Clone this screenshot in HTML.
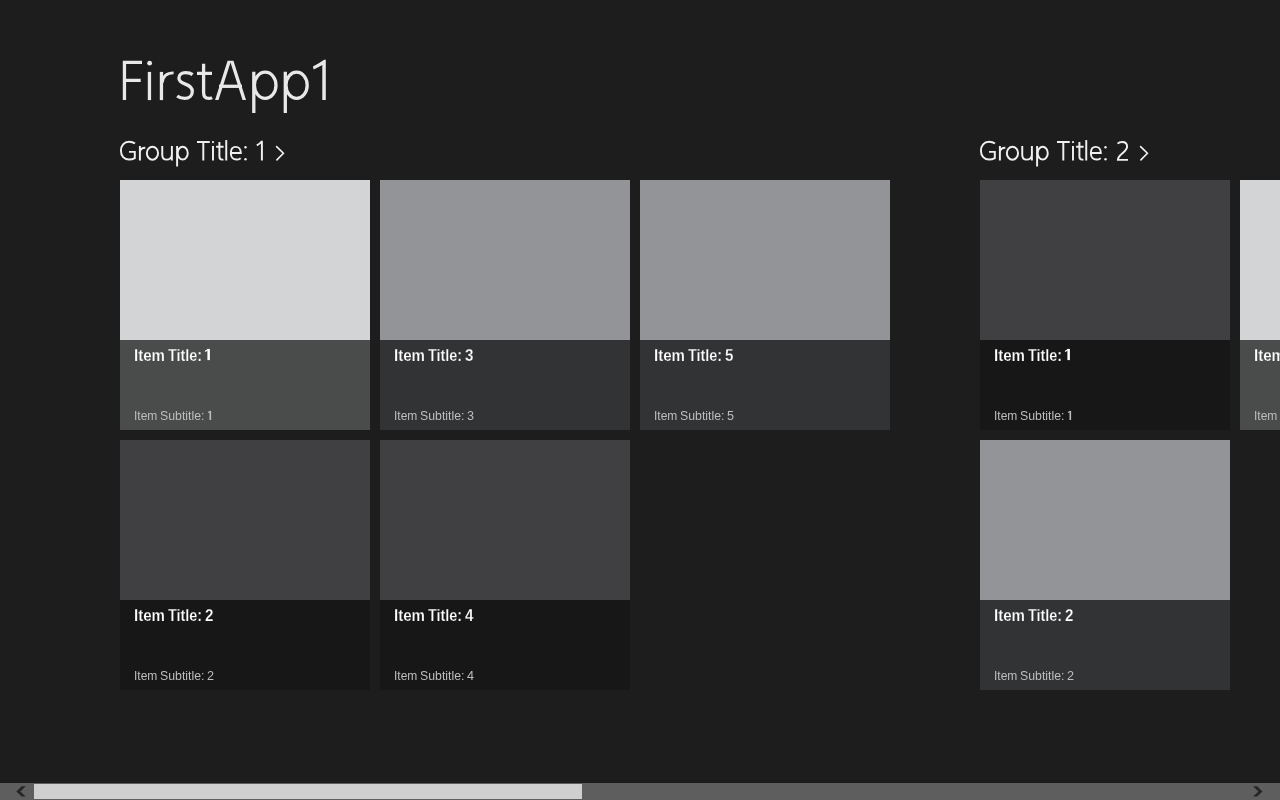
<!DOCTYPE html>
<html>
<head>
<meta charset="utf-8">
<style>
html,body{margin:0;padding:0;}
body{will-change:transform;width:1280px;height:800px;overflow:hidden;background:#1d1d1d;position:relative;font-family:"Liberation Sans",sans-serif;color:#fff;}
.t{position:absolute;white-space:nowrap;line-height:1;}
#title{left:118px;top:52px;margin:0;font-size:52px;font-weight:normal;color:transparent;}
.gt{margin:0;font-size:24px;font-weight:normal;color:transparent;}
.tile{position:absolute;width:250px;height:250px;overflow:hidden;}
.tile .img{position:absolute;left:0;top:0;width:250px;height:160px;}
.tile .ov{position:absolute;left:0;top:160px;width:250px;height:90px;}
.tile .w{position:absolute;white-space:nowrap;line-height:1;transform-origin:0 0;}
.tile .b{font-size:16px;font-weight:bold;color:#fff;top:8px;}
.tile .s{font-size:13px;color:#bebebe;top:69px;}
.light .img{background:#d3d4d6}.light .ov{background:#4a4b4b}.light .b{-webkit-text-stroke:0.25px #4a4b4b}
.mid .img{background:#939498}.mid .ov{background:#323335}.mid .b{-webkit-text-stroke:0.25px #323335}
.dark .img{background:#404042}.dark .ov{background:#171717}.dark .b{-webkit-text-stroke:0.25px #171717}
#sb{position:absolute;left:0;top:783px;width:1280px;height:17px;background:#5e5e5e;}
#thumb{position:absolute;left:34px;top:784px;width:548px;height:15px;background:#cfcfcf;}
</style>
</head>
<body>
<h1 class="t" id="title">FirstApp1</h1>
<h2 class="t gt" style="left:119px;top:139px;">Group Title: 1 ›</h2>
<h2 class="t gt" style="left:979px;top:139px;">Group Title: 2 ›</h2>
<svg style="position:absolute;left:0;top:0" width="400" height="130" viewBox="0 0 400 130">
<g fill="none" stroke="#e8e8e8" stroke-width="3.3" stroke-miterlimit="20">
<path d="M124.45,100.1 V62.45 H142 M124.45,80.45 H140.7"/>
<path d="M149.45,71.9 V100.1"/>
<path d="M161.45,71.9 V100.1"/><path stroke-width="2.9" d="M162.2,82.5 C163,76.2 166.8,72.9 173.6,72.9"/>
<path d="M192.6,74.6 C190.8,73.2 188.3,72.6 185.6,72.6 C181.2,72.6 178.9,75 178.9,78.2 C178.9,81.6 181.8,82.8 185.4,84.1 C189.6,85.6 192.3,87.4 192.3,91.4 C192.3,95.6 189.1,98.4 184.6,98.4 C181.6,98.4 179,97.5 177.2,96"/>
<path d="M203.6,63.8 V92.5 C203.6,96.6 205.4,98.4 208.6,98.4 C210,98.4 211.2,98.1 212.1,97.6 M197,73.3 H212"/>
<path d="M219,86.3 H242"/>
<ellipse cx="265.2" cy="85.3" rx="10.8" ry="13.1"/>
<ellipse cx="296.6" cy="85.3" rx="10.6" ry="13.1"/>

</g>
<g fill="none" stroke="#e8e8e8" stroke-width="3.3">
<path d="M253.8,71.75 V113 M285.3,71.75 V113"/>
</g>
<circle cx="149.6" cy="63.2" r="2.4" fill="#e8e8e8"/>
<polygon points="215.07,100.1 227.56,60.8 233.45,60.8 246.02,100.1 242.56,100.1 230.5,62.42 218.53,100.1" fill="#e8e8e8"/>
<path d="M322.3,100.1 H325.8 V59.7 H324.2 Q318.6,63.6 312.9,66.5 L313.7,69.4 Q318.2,67.3 322.3,64.9 Z" fill="#e8e8e8"/>
</svg>
<svg style="position:absolute;left:0;top:0" width="1280" height="180" viewBox="0 0 1280 180">
<g>
<g fill="none" stroke="#f0f0f0" stroke-width="1.95">
<path d="M135,143.6 C133.4,142.3 131.4,141.75 129,141.75 C124,141.75 120.95,145.6 120.95,150.7 C120.95,156 124.2,159.55 129,159.55 C131.3,159.55 133.3,159 134.8,158.1 V151.85 H129"/>
<path d="M139.9,145.9 V160.5 M139.9,151.5 C140.4,149 142.2,147.75 145.3,147.75"/>
<ellipse cx="152.45" cy="153.2" rx="5.6" ry="6.45"/>
<path d="M162.25,146 V155 C162.25,158 163.9,159.6 166.6,159.6 C169.4,159.6 171.9,157.6 171.9,154.2 M171.9,146 V160.5"/>
<path d="M177.1,146 V166.5"/>
<ellipse cx="182.7" cy="153.15" rx="5.05" ry="6.45"/>
<path d="M197,142.05 H209.75 M203.3,142.05 V160.5"/>
<path d="M213,146.06 V160.5"/>
<path d="M219.4,141.9 V156.5 C219.4,158.8 220.5,159.6 222,159.6 C222.6,159.6 223,159.5 223.4,159.3 M216.1,146.8 H223.6"/>
<path d="M226.25,140.06 V160.5"/>
<path d="M230.85,153 H240.8 C240.8,149 238.5,146.85 235.7,146.85 C232.7,146.85 230.85,149.4 230.85,153.2 C230.85,157.1 233.2,159.55 236.4,159.55 C238,159.55 239.4,159.1 240.7,158.2"/>
<path d="M261.9,140.8 V160.5 M256.8,145.3 C258.8,144.3 260.5,143 261.6,141.5"/>
</g>
<g fill="none" stroke="#f0f0f0" stroke-width="1.95" transform="translate(860,0)">
<path d="M135,143.6 C133.4,142.3 131.4,141.75 129,141.75 C124,141.75 120.95,145.6 120.95,150.7 C120.95,156 124.2,159.55 129,159.55 C131.3,159.55 133.3,159 134.8,158.1 V151.85 H129"/>
<path d="M139.9,145.9 V160.5 M139.9,151.5 C140.4,149 142.2,147.75 145.3,147.75"/>
<ellipse cx="152.45" cy="153.2" rx="5.6" ry="6.45"/>
<path d="M162.25,146 V155 C162.25,158 163.9,159.6 166.6,159.6 C169.4,159.6 171.9,157.6 171.9,154.2 M171.9,146 V160.5"/>
<path d="M177.1,146 V166.5"/>
<ellipse cx="182.7" cy="153.15" rx="5.05" ry="6.45"/>
<path d="M197,142.05 H209.75 M203.3,142.05 V160.5"/>
<path d="M213,146.06 V160.5"/>
<path d="M219.4,141.9 V156.5 C219.4,158.8 220.5,159.6 222,159.6 C222.6,159.6 223,159.5 223.4,159.3 M216.1,146.8 H223.6"/>
<path d="M226.25,140.06 V160.5"/>
<path d="M230.85,153 H240.8 C240.8,149 238.5,146.85 235.7,146.85 C232.7,146.85 230.85,149.4 230.85,153.2 C230.85,157.1 233.2,159.55 236.4,159.55 C238,159.55 239.4,159.1 240.7,158.2"/>
</g>
<g fill="none" stroke="#f0f0f0" stroke-width="1.95">
<path d="M1117.6,143.6 C1118.8,142.4 1120.5,141.9 1122.3,141.9 C1125.2,141.9 1127.1,143.8 1127.1,146.6 C1127.1,149.2 1125.5,150.8 1122.5,153.2 C1119.2,155.8 1117.9,157.2 1117.9,159.85 H1128"/>
</g>
</g>
<g fill="#f0f0f0"><circle cx="213" cy="142.05" r="1.1"/><circle cx="245.5" cy="147.3" r="1.2"/><circle cx="245.5" cy="159.3" r="1.2"/><g transform="translate(860,0)"><circle cx="213" cy="142.05" r="1.1"/><circle cx="245.5" cy="147.3" r="1.2"/><circle cx="245.5" cy="159.3" r="1.2"/></g></g>
</svg>
<svg style="position:absolute;left:270px;top:140px" width="20" height="25" viewBox="0 0 20 25"><path d="M6.6 6.6 L13.4 13.3 L6.9 19.9" fill="none" stroke="#f2f2f2" stroke-width="1.6" stroke-linecap="round" stroke-linejoin="miter"/></svg>
<svg style="position:absolute;left:1134px;top:140px" width="20" height="25" viewBox="0 0 20 25"><path d="M6.6 6.6 L13.4 13.3 L6.9 19.9" fill="none" stroke="#f2f2f2" stroke-width="1.6" stroke-linecap="round" stroke-linejoin="miter"/></svg>

<div class="tile light" style="left:120px;top:180px;"><div class="img"></div><div class="ov"><span class="w b" style="left:13.86px;transform:scaleX(0.942)">Item</span><span class="w b" style="left:48px;transform:scaleX(0.9)">Title:</span><svg style="position:absolute;left:80px;top:5px" width="14" height="80" viewBox="80 5 14 80"><rect x="87.4" y="8.9" width="2.5" height="11.2" fill="#fff"/><path d="M85.1,11.5 L88.2,9.5" stroke="#fff" stroke-width="1.4"/><rect x="89.5" y="70.9" width="1.6" height="9.1" fill="#bebebe"/><path d="M88.1,72.6 L90,71.5" stroke="#bebebe" stroke-width="1.2"/></svg><span class="w s" style="left:13.9px;transform:scaleX(0.925)">Item</span><span class="w s" style="left:40.35px;transform:scaleX(0.947)">Subtitle:</span></div></div>
<div class="tile dark" style="left:120px;top:440px;"><div class="img"></div><div class="ov"><span class="w b" style="left:13.86px;transform:scaleX(0.942)">Item</span><span class="w b" style="left:48px;transform:scaleX(0.9)">Title:</span><span class="w b" style="left:84.8px;transform:scaleX(0.95)">2</span><span class="w s" style="left:13.9px;transform:scaleX(0.925)">Item</span><span class="w s" style="left:40.35px;transform:scaleX(0.947)">Subtitle:</span><span class="w s" style="left:87.1px;transform:scaleX(0.97)">2</span></div></div>
<div class="tile mid" style="left:380px;top:180px;"><div class="img"></div><div class="ov"><span class="w b" style="left:13.86px;transform:scaleX(0.942)">Item</span><span class="w b" style="left:48px;transform:scaleX(0.9)">Title:</span><span class="w b" style="left:84.8px;transform:scaleX(0.95)">3</span><span class="w s" style="left:13.9px;transform:scaleX(0.925)">Item</span><span class="w s" style="left:40.35px;transform:scaleX(0.947)">Subtitle:</span><span class="w s" style="left:87.1px;transform:scaleX(0.97)">3</span></div></div>
<div class="tile dark" style="left:380px;top:440px;"><div class="img"></div><div class="ov"><span class="w b" style="left:13.86px;transform:scaleX(0.942)">Item</span><span class="w b" style="left:48px;transform:scaleX(0.9)">Title:</span><span class="w b" style="left:84.8px;transform:scaleX(0.95)">4</span><span class="w s" style="left:13.9px;transform:scaleX(0.925)">Item</span><span class="w s" style="left:40.35px;transform:scaleX(0.947)">Subtitle:</span><span class="w s" style="left:87.1px;transform:scaleX(0.97)">4</span></div></div>
<div class="tile mid" style="left:640px;top:180px;"><div class="img"></div><div class="ov"><span class="w b" style="left:13.86px;transform:scaleX(0.942)">Item</span><span class="w b" style="left:48px;transform:scaleX(0.9)">Title:</span><span class="w b" style="left:84.8px;transform:scaleX(0.95)">5</span><span class="w s" style="left:13.9px;transform:scaleX(0.925)">Item</span><span class="w s" style="left:40.35px;transform:scaleX(0.947)">Subtitle:</span><span class="w s" style="left:87.1px;transform:scaleX(0.97)">5</span></div></div>

<div class="tile dark" style="left:980px;top:180px;"><div class="img"></div><div class="ov"><span class="w b" style="left:13.86px;transform:scaleX(0.942)">Item</span><span class="w b" style="left:48px;transform:scaleX(0.9)">Title:</span><svg style="position:absolute;left:80px;top:5px" width="14" height="80" viewBox="80 5 14 80"><rect x="87.4" y="8.9" width="2.5" height="11.2" fill="#fff"/><path d="M85.1,11.5 L88.2,9.5" stroke="#fff" stroke-width="1.4"/><rect x="89.5" y="70.9" width="1.6" height="9.1" fill="#bebebe"/><path d="M88.1,72.6 L90,71.5" stroke="#bebebe" stroke-width="1.2"/></svg><span class="w s" style="left:13.9px;transform:scaleX(0.925)">Item</span><span class="w s" style="left:40.35px;transform:scaleX(0.947)">Subtitle:</span></div></div>
<div class="tile mid" style="left:980px;top:440px;"><div class="img"></div><div class="ov"><span class="w b" style="left:13.86px;transform:scaleX(0.942)">Item</span><span class="w b" style="left:48px;transform:scaleX(0.9)">Title:</span><span class="w b" style="left:84.8px;transform:scaleX(0.95)">2</span><span class="w s" style="left:13.9px;transform:scaleX(0.925)">Item</span><span class="w s" style="left:40.35px;transform:scaleX(0.947)">Subtitle:</span><span class="w s" style="left:87.1px;transform:scaleX(0.97)">2</span></div></div>
<div class="tile light" style="left:1240px;top:180px;"><div class="img"></div><div class="ov"><span class="w b" style="left:13.86px;transform:scaleX(0.942)">Item</span><span class="w b" style="left:48px;transform:scaleX(0.9)">Title:</span><span class="w b" style="left:84.8px;transform:scaleX(0.95)">3</span><span class="w s" style="left:13.9px;transform:scaleX(0.925)">Item</span><span class="w s" style="left:40.35px;transform:scaleX(0.947)">Subtitle:</span><span class="w s" style="left:87.1px;transform:scaleX(0.97)">3</span></div></div>

<div id="sb"></div>
<div id="thumb"></div>
<svg style="position:absolute;left:0;top:783px" width="1280" height="17" viewBox="0 0 1280 17"><polygon points="21.7,3.3 25.75,3.3 20.35,8.56 25.75,13.6 21.7,13.6 16.3,8.56" fill="#252525"/><polygon points="1257.1,3.3 1253.05,3.3 1258.45,8.56 1253.05,13.6 1257.1,13.6 1262.5,8.56" fill="#252525"/></svg>
</body>
</html>
